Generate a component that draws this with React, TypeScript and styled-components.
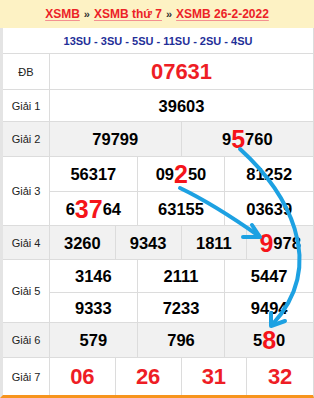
import React from "react";
import styled, { createGlobalStyle } from "styled-components";

const GlobalStyle = createGlobalStyle`
  html, body { margin: 0; padding: 0; background: #fff; }
  body { font-family: "Liberation Sans", Arial, sans-serif; }
`;

const Page = styled.div`
  position: relative;
  width: 314px;
  height: 398px;
  overflow: hidden;
`;

const Header = styled.div`
  height: 28px;
  background: #fdf2c4;
  display: flex;
  align-items: center;
  justify-content: center;
  font-size: 12px;
  font-weight: bold;
`;

const Crumb = styled.a`
  color: #ec2227;
  text-decoration: underline;
  text-decoration-color: #f39090;
  text-underline-offset: 2px;
`;

const Sep = styled.span`
  color: #333;
  margin: 0 4px;
  font-size: 11px;
`;

const Table = styled.div`
  border-left: 3px solid #e4e4e4;
  border-right: 1px solid #dcdcdc;
  border-bottom: 3px solid #f7941d;
`;

const SuRow = styled.div`
  height: 26px;
  box-sizing: border-box;
  border-bottom: 1px solid #dcdcdc;
  display: flex;
  align-items: center;
  justify-content: center;
  color: #1f2f98;
  font-size: 11px;
  font-weight: bold;
`;

const Row = styled.div<{ $h: number; $alt?: boolean; $last?: boolean }>`
  display: grid;
  grid-template-columns: 47px 1fr;
  height: ${(p) => p.$h}px;
  box-sizing: border-box;
  border-bottom: ${(p) => (p.$last ? "none" : "1px solid #dcdcdc")};
  background: ${(p) => (p.$alt ? "#f1f1f1" : "#fff")};
`;

const Label = styled.div`
  display: flex;
  align-items: center;
  justify-content: center;
  border-right: 1px solid #dcdcdc;
  font-size: 11px;
  color: #222;
`;

const Cells = styled.div<{ $cols: number; $rows: string }>`
  display: grid;
  grid-template-columns: repeat(${(p) => p.$cols}, 1fr);
  grid-template-rows: ${(p) => p.$rows};
  min-width: 0;
`;

const Cell = styled.div<{ $right: boolean; $bottom: boolean; $red?: boolean }>`
  display: flex;
  align-items: center;
  justify-content: center;
  min-width: 0;
  border-right: ${(p) => (p.$right ? "1px solid #dcdcdc" : "none")};
  border-bottom: ${(p) => (p.$bottom ? "1px solid #dcdcdc" : "none")};
  font-size: ${(p) => (p.$red ? "22px" : "16.5px")};
  font-weight: bold;
  color: ${(p) => (p.$red ? "#ee1d25" : "#000")};
  line-height: 20px;
`;

const Hot = styled.span`
  color: #f5141a;
  font-size: 25px;
  line-height: 0;
`;

const Overlay = styled.svg`
  position: absolute;
  left: 0;
  top: 0;
  pointer-events: none;
`;

type Prize = {
  label: string;
  h: number;
  cols: number;
  rows: string;
  alt?: boolean;
  red?: boolean;
  last?: boolean;
  nums: string[];
};

const prizes: Prize[] = [
  { label: "ĐB", h: 36, cols: 1, rows: "1fr", red: true, nums: ["07631"] },
  { label: "Giải 1", h: 32, cols: 1, rows: "1fr", nums: ["39603"] },
  { label: "Giải 2", h: 35, cols: 2, rows: "1fr", alt: true, nums: ["79799", "9[5]760"] },
  {
    label: "Giải 3",
    h: 69,
    cols: 3,
    rows: "35px 1fr",
    nums: ["56317", "09[2]50", "81252", "6[37]64", "63155", "03639"],
  },
  { label: "Giải 4", h: 34, cols: 4, rows: "1fr", alt: true, nums: ["3260", "9343", "1811", "[9]978"] },
  {
    label: "Giải 5",
    h: 63,
    cols: 3,
    rows: "33px 1fr",
    nums: ["3146", "2111", "5447", "9333", "7233", "9494"],
  },
  { label: "Giải 6", h: 35, cols: 3, rows: "1fr", alt: true, nums: ["579", "796", "5[8]0"] },
  { label: "Giải 7", h: 37, cols: 4, rows: "1fr", red: true, last: true, nums: ["06", "26", "31", "32"] },
];

function renderNum(n: string) {
  const parts = n.split(/(\[[^\]]+\])/).filter((s) => s.length > 0);
  return parts.map((p, i) =>
    p.startsWith("[") ? <Hot key={i}>{p.slice(1, -1)}</Hot> : <React.Fragment key={i}>{p}</React.Fragment>
  );
}

export default function App() {
  return (
    <Page>
      <GlobalStyle />
      <Header>
        <Crumb>XSMB</Crumb>
        <Sep>»</Sep>
        <Crumb>XSMB thứ 7</Crumb>
        <Sep>»</Sep>
        <Crumb>XSMB 26-2-2022</Crumb>
      </Header>
      <Table>
        <SuRow>13SU - 3SU - 5SU - 11SU - 2SU - 4SU</SuRow>
        {prizes.map((p) => {
          const total = p.nums.length;
          return (
            <Row key={p.label} $h={p.h} $alt={p.alt} $last={p.last}>
              <Label>{p.label}</Label>
              <Cells $cols={p.cols} $rows={p.rows}>
                {p.nums.map((n, i) => (
                  <Cell
                    key={i}
                    $red={p.red}
                    $right={(i + 1) % p.cols !== 0}
                    $bottom={i < total - p.cols}
                  >
                    {renderNum(n)}
                  </Cell>
                ))}
              </Cells>
            </Row>
          );
        })}
      </Table>
      <Overlay width="314" height="398" viewBox="0 0 314 398">
        <g fill="none" stroke="#1da1e2" strokeWidth="4" strokeLinecap="round" strokeLinejoin="round">
          <path d="M240,149 C285,190 330,262 272,325" />
          <path d="M271,313 L271,326 L285,321" />
          <path d="M180,188 C205,200 232,217 259,236" />
          <path d="M252,225 L260,237 L243,237" />
        </g>
      </Overlay>
    </Page>
  );
}
